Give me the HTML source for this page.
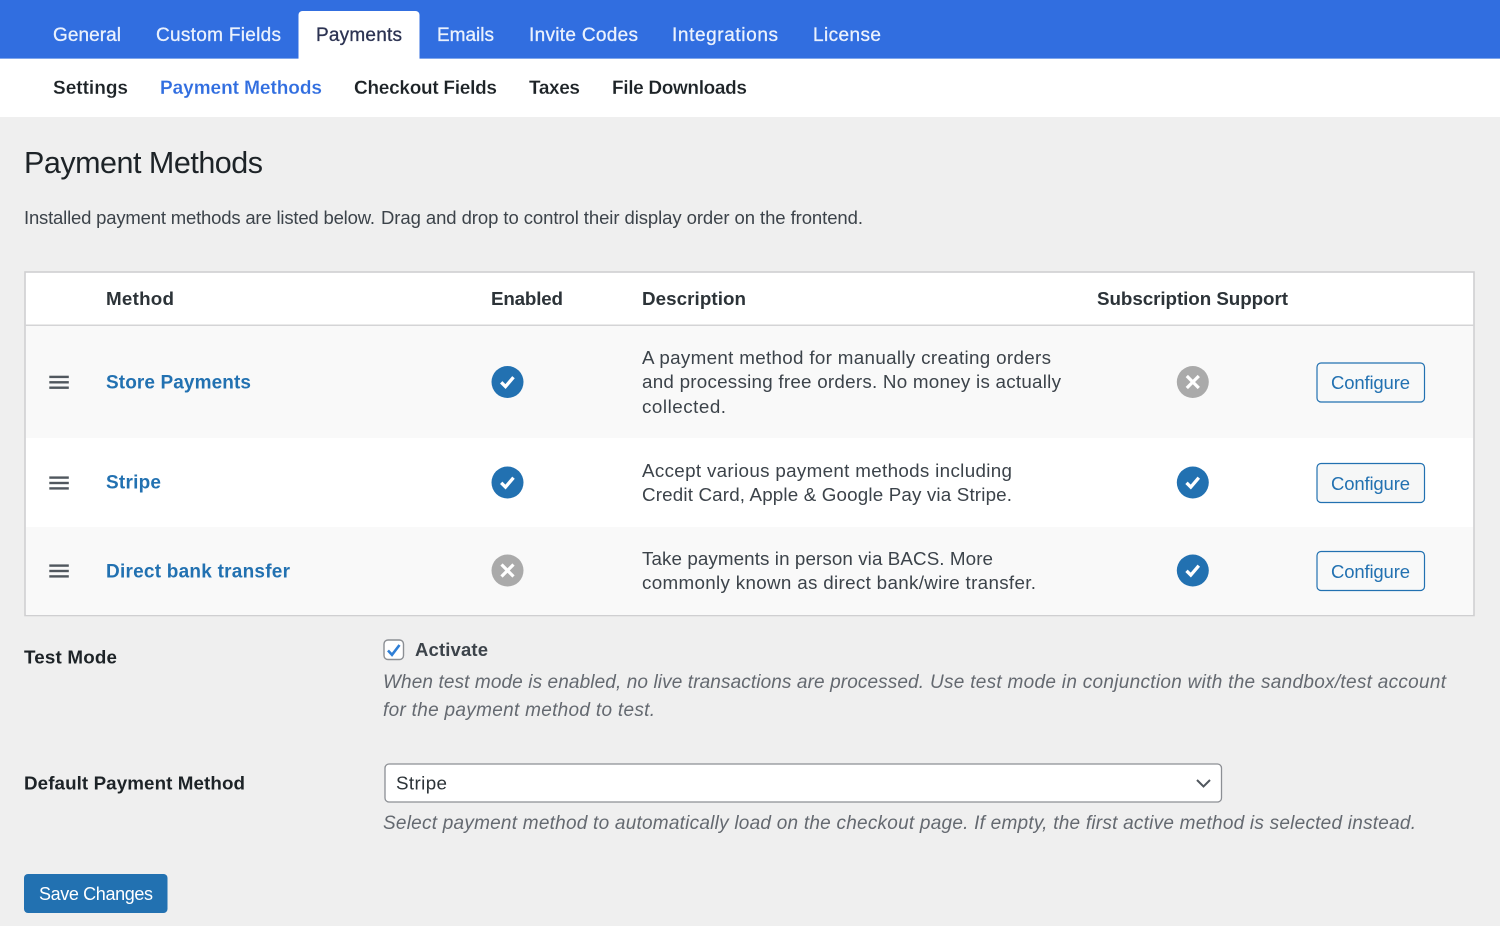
<!DOCTYPE html>
<html><head><meta charset="utf-8"><title>Payment Methods</title>
<style>
html,body{margin:0;padding:0;width:1500px;height:926px;overflow:hidden;background:#efefef}
svg{display:block;position:absolute;left:0;top:0;filter:blur(.3px)}
text{font-family:"Liberation Sans",sans-serif;font-size:18.800px;fill:#3c434a;white-space:pre}
.nav{fill:#eaf1fd;stroke:#eaf1fd;stroke-width:.3px;font-size:19px}
.sub{fill:#1d2327;font-weight:700;font-size:19px;stroke:#fff;stroke-width:.15px}
.th{fill:#2c3338;font-weight:700;font-size:18.800px}
.lnk{fill:#2271b1;font-weight:700;font-size:19px}
.it{font-style:italic;fill:#646970;font-size:19px}
.lab{fill:#1d2327;font-weight:700;font-size:18.800px}
.cfg{fill:#2271b1;font-size:18.500px}
</style></head><body>
<svg width="1500" height="926" viewBox="0 0 1500 926" xmlns="http://www.w3.org/2000/svg">
<defs>
<g id="ok"><circle r="16" fill="#2271b1"/><path d="M-6.300 .3L-2 4.600L6-4.800" fill="none" stroke="#fff" stroke-width="3.300"/></g>
<g id="no"><circle r="16" fill="#aaa"/><path d="M-6-6L6 6M6-6L-6 6" fill="none" stroke="#fff" stroke-width="3.200"/></g>
<g id="drag" fill="#50575e"><rect x="0" y="-6.600" width="19.500" height="2.400"/><rect x="0" y="-1.200" width="19.500" height="2.400"/><rect x="0" y="4.200" width="19.500" height="2.400"/></g>
</defs>
<rect width="1500" height="926" fill="#efefef"/>
<rect width="1500" height="58" fill="#316ee0"/>
<rect y="58" width="1500" height="1" fill="#7fa6ec"/>
<rect y="59" width="1500" height="58" fill="#fff"/>
<path d="M298.500 59V15a4 4 0 0 1 4-4h113a4 4 0 0 1 4 4v44z" fill="#fff"/>

<text class="nav" x="53" y="41" textLength="68">General</text>
<text class="nav" x="156" y="41" textLength="125">Custom Fields</text>
<text class="nav" x="316" y="41" textLength="86" style="fill:#2c3352;stroke:#2c3352">Payments</text>
<text class="nav" x="437" y="41" textLength="57">Emails</text>
<text class="nav" x="529" y="41" textLength="109">Invite Codes</text>
<text class="nav" x="672" y="41" textLength="106">Integrations</text>
<text class="nav" x="813" y="41" textLength="68">License</text>

<text class="sub" x="53" y="94" textLength="75">Settings</text>
<text class="sub" x="160" y="94" textLength="162" style="fill:#316ee0">Payment Methods</text>
<text class="sub" x="354" y="94" textLength="143">Checkout Fields</text>
<text class="sub" x="529" y="94" textLength="51">Taxes</text>
<text class="sub" x="612" y="94" textLength="135">File Downloads</text>

<text x="24" y="173" textLength="239" style="font-size:30.500px;fill:#1d2327">Payment Methods</text>
<text x="24" y="224" textLength="351" style="font-size:18.500px">Installed payment methods are listed below.</text>
<text x="381" y="224" textLength="482" style="font-size:18.500px">Drag and drop to control their display order on the frontend.</text>

<rect x="25" y="272" width="1449" height="343.500" fill="#fff" stroke="#cfcfd1" stroke-width="1.600"/>
<rect x="26" y="326" width="1447" height="112" fill="#f9f9f9"/>
<rect x="26" y="527" width="1447" height="88" fill="#f9f9f9"/>
<rect x="25" y="324.500" width="1449" height="1.500" fill="#d4d4d6"/>

<text class="th" x="106" y="305" textLength="68">Method</text>
<text class="th" x="491" y="305" textLength="72">Enabled</text>
<text class="th" x="642" y="305" textLength="104">Description</text>
<text class="th" x="1097" y="305" textLength="191">Subscription Support</text>

<use href="#drag" x="49.300" y="382.300"/>
<use href="#drag" x="49.300" y="483"/>
<use href="#drag" x="49.300" y="571"/>

<text class="lnk" x="106" y="388.500" textLength="145">Store Payments</text>
<text class="lnk" x="106" y="488.500" textLength="55">Stripe</text>
<text class="lnk" x="106" y="577.300" textLength="184">Direct bank transfer</text>

<use href="#ok" x="507.500" y="382"/>
<use href="#ok" x="507.500" y="482.500"/>
<use href="#no" x="507.500" y="570.500"/>

<text x="642" y="364" textLength="409">A payment method for manually creating orders</text>
<text x="642" y="388" textLength="419">and processing free orders. No money is actually</text>
<text x="642" y="413" textLength="84">collected.</text>
<text x="642" y="477" textLength="370">Accept various payment methods including</text>
<text x="642" y="501" textLength="370">Credit Card, Apple &amp; Google Pay via Stripe.</text>
<text x="642" y="565" textLength="351">Take payments in person via BACS. More</text>
<text x="642" y="589" textLength="394">commonly known as direct bank/wire transfer.</text>

<use href="#no" x="1192.800" y="382"/>
<use href="#ok" x="1192.800" y="482.500"/>
<use href="#ok" x="1192.800" y="570.500"/>

<rect x="1317" y="363" width="107.500" height="39" rx="4" fill="#f8f9f9" stroke="#2271b1" stroke-width="1.200"/>
<rect x="1317" y="463.500" width="107.500" height="39" rx="4" fill="#f6f7f7" stroke="#2271b1" stroke-width="1.200"/>
<rect x="1317" y="551.500" width="107.500" height="39" rx="4" fill="#f8f9f9" stroke="#2271b1" stroke-width="1.200"/>
<text class="cfg" x="1331" y="389" textLength="79">Configure</text>
<text class="cfg" x="1331" y="490" textLength="79">Configure</text>
<text class="cfg" x="1331" y="578" textLength="79">Configure</text>

<text class="lab" x="24" y="663.300" textLength="93">Test Mode</text>
<rect x="384" y="640" width="19.500" height="19.500" rx="4" fill="#fff" stroke="#8c8f94" stroke-width="1.400"/>
<path d="M388 650.500L392 654.800L399.500 645" fill="none" stroke="#2f7fd6" stroke-width="2.600"/>
<text x="415" y="656" textLength="73" style="font-weight:700;fill:#3c434a;font-size:18.500px">Activate</text>
<text class="it" x="383" y="688" textLength="541">When test mode is enabled, no live transactions are processed.</text>
<text class="it" x="930" y="688" textLength="516">Use test mode in conjunction with the sandbox/test account</text>
<text class="it" x="383" y="716" textLength="272">for the payment method to test.</text>

<text class="lab" x="24" y="789.500" textLength="221">Default Payment Method</text>
<rect x="385" y="764" width="836.500" height="38" rx="4" fill="#fff" stroke="#8c8f94" stroke-width="1.300"/>
<text x="396" y="789.500" textLength="51" style="fill:#2c3338">Stripe</text>
<path d="M1197 780L1203.500 786.500L1210 780" fill="none" stroke="#50575e" stroke-width="2"/>
<text class="it" x="383" y="829" textLength="1033">Select payment method to automatically load on the checkout page. If empty, the first active method is selected instead.</text>

<rect x="24" y="874" width="143.500" height="39" rx="4" fill="#2271b1"/>
<text x="39" y="900" textLength="114" style="fill:#fff;font-size:18px">Save Changes</text>
</svg>
</body></html>
